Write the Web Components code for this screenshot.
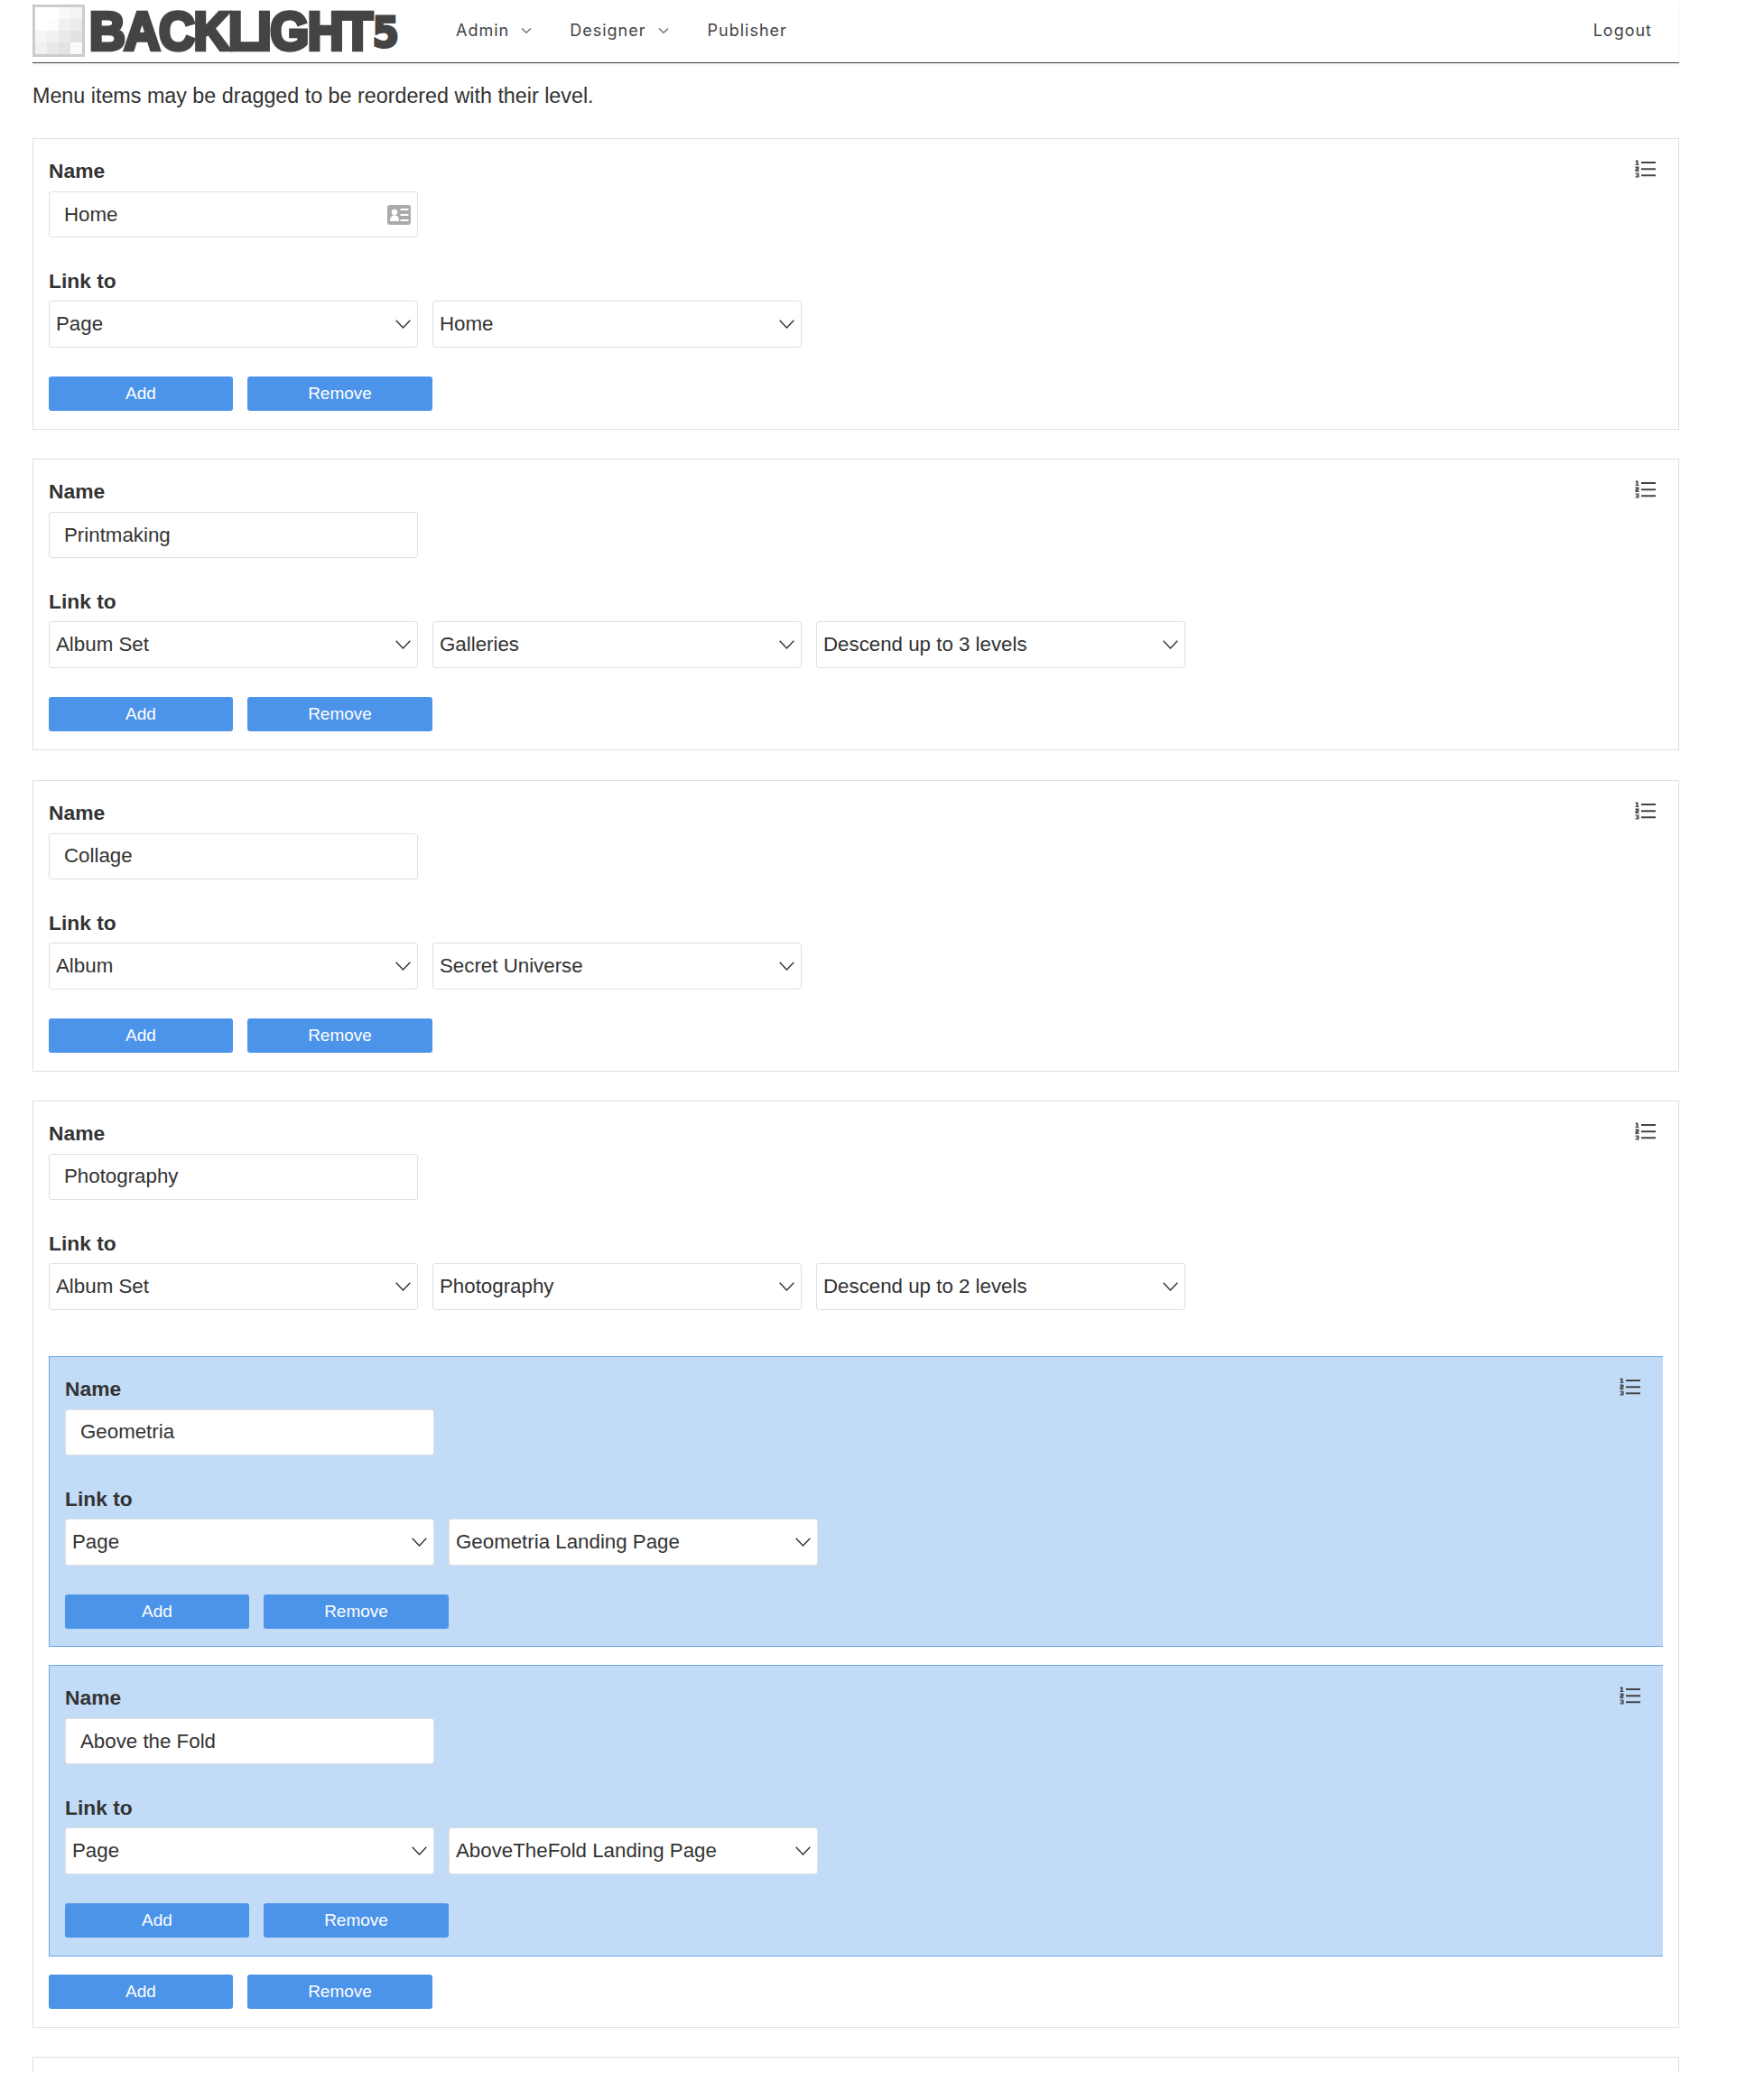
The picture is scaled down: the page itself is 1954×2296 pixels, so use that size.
<!DOCTYPE html>
<html>
<head>
<meta charset="utf-8">
<title>Backlight menu</title>
<style>
  html, body { margin: 0; height: 2296px; overflow: hidden; background: #fff; }
  body { padding: 0 94px 0 36px; box-sizing: border-box; font-family: "Liberation Sans", Arial, sans-serif; color: #333; }
  .intro { height: 24px; line-height: 24px; margin: 24px 0 35px; font-size: 23.3px; }
</style>
</head>
<body>
<bl-header></bl-header>
<div class="intro">Menu items may be dragged to be reordered with their level.</div>

<bl-item name="Home" card>
  <bl-select slot="links">Page</bl-select>
  <bl-select slot="links">Home</bl-select>
</bl-item>
<bl-item name="Printmaking">
  <bl-select slot="links">Album Set</bl-select>
  <bl-select slot="links">Galleries</bl-select>
  <bl-select slot="links">Descend up to 3 levels</bl-select>
</bl-item>
<bl-item name="Collage">
  <bl-select slot="links">Album</bl-select>
  <bl-select slot="links">Secret Universe</bl-select>
</bl-item>
<bl-item name="Photography" parent>
  <bl-select slot="links">Album Set</bl-select>
  <bl-select slot="links">Photography</bl-select>
  <bl-select slot="links">Descend up to 2 levels</bl-select>
  <bl-item name="Geometria" nested>
    <bl-select slot="links">Page</bl-select>
    <bl-select slot="links">Geometria Landing Page</bl-select>
  </bl-item>
  <bl-item name="Above the Fold" nested>
    <bl-select slot="links">Page</bl-select>
    <bl-select slot="links">AboveTheFold Landing Page</bl-select>
  </bl-item>
</bl-item>
<bl-item blank></bl-item>

<script>
class BlHeader extends HTMLElement {
  constructor() {
    super();
    const chevron = `<svg class="chev" width="12" height="6" viewBox="0 0 12 6"><path d="M1 .5 6 5.3 11 .5" fill="none" stroke="#666" stroke-width="1.2"/></svg>`;
    const greys = ['#fff','#fff','#f9f9f9','#f4f4f4','#fff','#fdfdfd','#f1f1f1','#ececec','#f6f6f6','#f1f1f1','#e9e9e9','#e2e2e2','#f1f1f1','#e8e8e8','#e3e3e3','#fafafa'];
    this.attachShadow({ mode: 'open' }).innerHTML = `
      <style>
        :host { display: flex; align-items: center; height: 69px; border-bottom: 1px solid #444; box-shadow: 0 1px 2px rgba(0,0,0,.08); position: relative; }
        .mark { width: 52px; height: 52px; border: 3px solid #ccc; display: grid; grid-template-columns: repeat(4, 13px); grid-auto-rows: 13px; margin: -2px 5px 0 0; }
        .word { align-self: flex-start; width: 346px; height: 67px; margin-top: 1px; color: #444; font: bold 60px/67px "Liberation Sans", Arial, sans-serif; letter-spacing: -1.5px; -webkit-text-stroke: 4.5px #444; white-space: nowrap; transform: scaleX(.92); transform-origin: left center; }
        .word span { margin-left: 1px; font: bold 46px/40px "DejaVu Sans", sans-serif; letter-spacing: 0; -webkit-text-stroke: 3px #444; vertical-align: 3px; }
        nav { display: flex; margin: -2px 0 0 60px; flex: 1; font: 18px "Inter", sans-serif; letter-spacing: 1px; color: #444; }
        .link { display: flex; align-items: center; margin-right: 42px; }
        .link + .link { margin-right: 43px; }
        .chev { margin-left: 13px; }
        .link.logout { margin: 0 30px 0 auto; }
      </style>
      <div class="mark">${greys.map(g => `<i style="background:${g}"></i>`).join('')}</div>
      <div class="word">BACKLIGHT<span>5</span></div>
      <nav>
        <span class="link">Admin${chevron}</span>
        <span class="link">Designer${chevron}</span>
        <span class="link">Publisher</span>
        <span class="link logout">Logout</span>
      </nav>`;
  }
}

class BlSelect extends HTMLElement {
  constructor() {
    super();
    this.attachShadow({ mode: 'open' }).innerHTML = `
      <style>
        :host { display: flex; align-items: center; justify-content: space-between; box-sizing: border-box; width: 409px; height: 52px; padding: 0 7px; background: #fff; border: 1px solid #e0e0e0; border-radius: 3px; font-size: 22.3px; color: #333; }
      </style>
      <span><slot></slot></span>
      <svg width="17" height="10" viewBox="0 0 17 10"><path d="M.7.7 8.500 9 16.300.7" fill="none" stroke="#333" stroke-width="1.4"/></svg>`;
  }
}

class BlItem extends HTMLElement {
  constructor() {
    super();
    const idCard = this.hasAttribute('card') ? `<svg class="idcard" width="26" height="22" viewBox="0 0 26 22"><rect width="26" height="22" rx="3" fill="#aaa"/><circle cx="8" cy="8" r="3.200" fill="#fff"/><path d="M3 18c0-5 2-6.500 5-6.500s5 1.500 5 6.500z" fill="#fff"/><path d="M14.500 5h9M14.500 11h9M14.500 17h9" stroke="#fff" stroke-width="2.200"/></svg>` : '';
    this.attachShadow({ mode: 'open' }).innerHTML = `
      <style>
        :host { display: block; position: relative; box-sizing: border-box; border: 1px solid #e0e0e0; padding: 23px 17px 20px; margin-bottom: 32.33px; font-size: 22.3px; color: #333; }
        :host([nested]) { background: #c2dcf7; border-color: #6ea6e6; border-right: 0; margin: 0 0 20px; padding: 23px 18px 19.5px 17px; }
        :host([blank]) { height: 120px; }
        :host([blank]) > * { display: none; }
        label { display: block; height: 24px; line-height: 24px; font-weight: bold; font-size: 22.8px; margin-bottom: 11px; }
        .second { margin: 36px 0 10px; }
        .name { display: flex; align-items: center; justify-content: space-between; box-sizing: border-box; width: 409px; height: 51px; padding: 0 7px 0 16px; background: #fff; border: 1px solid #e0e0e0; border-radius: 3px; }
        .links { display: flex; gap: 16px; }
        .kids { display: block; margin-top: 51px; }
        .actions { display: flex; gap: 16px; margin-top: 32px; }
        :host([parent]) .actions { margin-top: 0; }
        button { width: 204px; height: 38px; padding: 0; border: 0; border-radius: 3px; background: #4c93ea; color: #fff; font: 19px "Liberation Sans", Arial, sans-serif; }
        button + button { width: 205px; }
        .order { position: absolute; top: 23px; right: 25px; }
      </style>
      <svg class="order" width="23" height="20" viewBox="0 0 23 20">
        <path d="M7 3h16M7 10.300h16M7 17.300h16" stroke="#444" stroke-width="2"/>
        <path d="M1 .5h2.500v4.500h1v1H.5V5h1V2H.5zM.5 7.500h4v3l-2.500 1h2.500v1.500h-4v-3l2.500-1H.5zM.5 14.500h4v5h-4v-1.200h2.500v-.8H1.200v-1H3V15.700H.5z" fill="#444"/>
      </svg>
      <label>Name</label>
      <div class="name"><span>${this.getAttribute('name') || ''}</span>${idCard}</div>
      <label class="second">Link to</label>
      <div class="links"><slot name="links"></slot></div>
      ${this.hasAttribute('parent') ? '<slot class="kids"></slot>' : ''}
      <div class="actions"><button>Add</button><button>Remove</button></div>`;
  }
}

customElements.define('bl-header', BlHeader);
customElements.define('bl-select', BlSelect);
customElements.define('bl-item', BlItem);
</script>
</body>
</html>
